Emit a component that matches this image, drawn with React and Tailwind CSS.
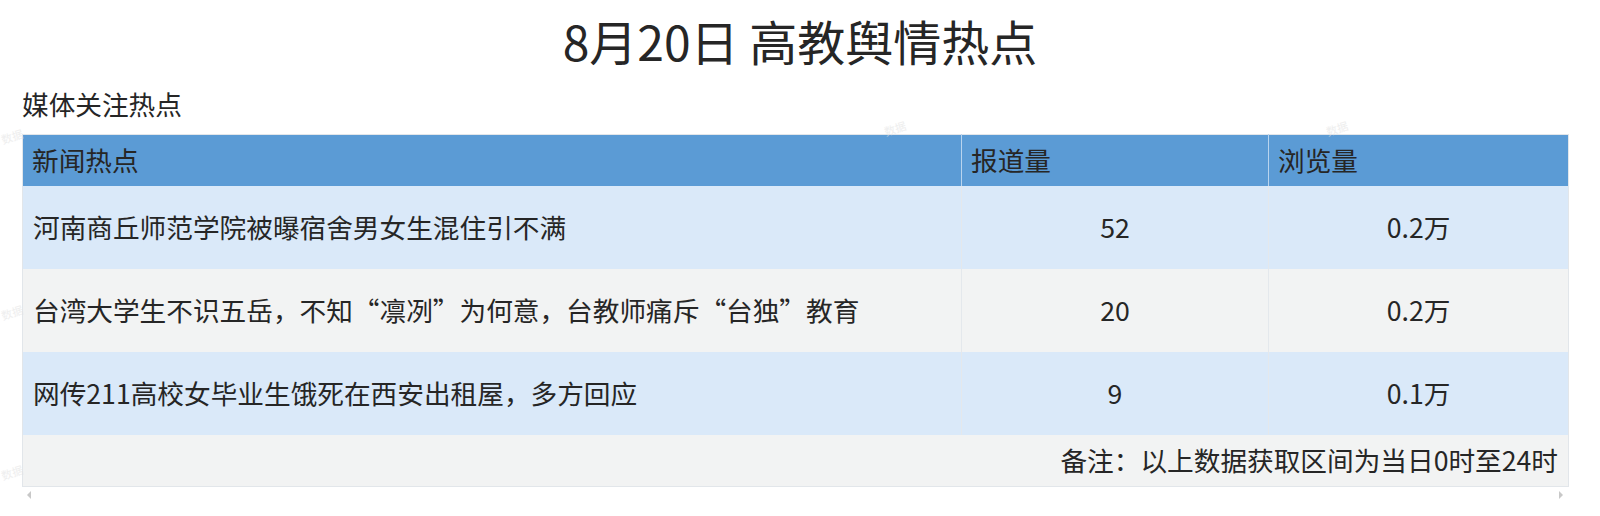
const rows = [
  { title: '河南商丘师范学院被曝宿舍男女生混住引不满', reports: '52', views: '0.2万', bg: 'bg-[#dae9f9]' },
  { title: '台湾大学生不识五岳，不知“凛冽”为何意，台教师痛斥“台独”教育', reports: '20', views: '0.2万', bg: 'bg-[#f2f3f3]' },
  { title: '网传211高校女毕业生饿死在西安出租屋，多方回应', reports: '9', views: '0.1万', bg: 'bg-[#dae9f9]' },
];

const marks = [
  'left-[1px] top-[128px]',
  'left-[884px] top-[120px]',
  'left-[1326px] top-[120px]',
  'left-[1px] top-[304px]',
  'left-[1px] top-[464px]',
];

function App() {
  return (
    <div className="relative w-[1600px] h-[516px] bg-white text-[#262626] overflow-hidden font-['Noto_Sans_CJK_SC','Noto_Sans',sans-serif]">
      <h1 className="pt-[4px] text-center text-[48px] leading-[72px] font-normal">
        8月20日 高教舆情热点
      </h1>
      <p className="mt-[8px] pl-[22px] text-[26.67px] leading-[40px]">媒体关注热点</p>

      <div className="mt-[10px] pl-[22px] pr-[32px]">
        <table className="w-[1546px] table-fixed border-collapse border border-[#e2e6ea]">
          <colgroup>
            <col className="w-[939px]" />
            <col className="w-[307px]" />
            <col className="w-[300px]" />
          </colgroup>
          <thead>
            <tr className="h-[51px] bg-[#5b9bd5] text-[26.67px] text-left">
              <th className="px-[9px] font-normal border-r border-[#b9d4ee]">新闻热点</th>
              <th className="px-[9px] font-normal border-r border-[#b9d4ee]">报道量</th>
              <th className="px-[9px] font-normal">浏览量</th>
            </tr>
          </thead>
          <tbody>
            {rows.map((row) => (
              <tr key={row.title} className={`h-[83px] text-[26.67px] ${row.bg}`}>
                <td className="px-[10px] border-r border-[#e4e8ec]">{row.title}</td>
                <td className="text-center border-r border-[#e4e8ec]">{row.reports}</td>
                <td className="text-center">{row.views}</td>
              </tr>
            ))}
            <tr className="h-[52px] bg-[#f2f3f3]">
              <td colSpan={3} className="pr-[10px] text-right text-[26.67px]">
                备注：以上数据获取区间为当日0时至24时
              </td>
            </tr>
          </tbody>
        </table>
        <div className="flex justify-between items-center px-[5px] h-[16px]">
          <span className="w-0 h-0 border-y-[4px] border-y-transparent border-r-[4px] border-r-[#c8c8c8]" />
          <span className="w-0 h-0 border-y-[4px] border-y-transparent border-l-[4px] border-l-[#c8c8c8]" />
        </div>
      </div>

      {marks.map((pos) => (
        <span
          key={pos}
          className={`absolute ${pos} -rotate-[18deg] text-[11px] text-[#e4e4e4] opacity-60 pointer-events-none`}
        >
          数据
        </span>
      ))}
    </div>
  );
}

export default App;
